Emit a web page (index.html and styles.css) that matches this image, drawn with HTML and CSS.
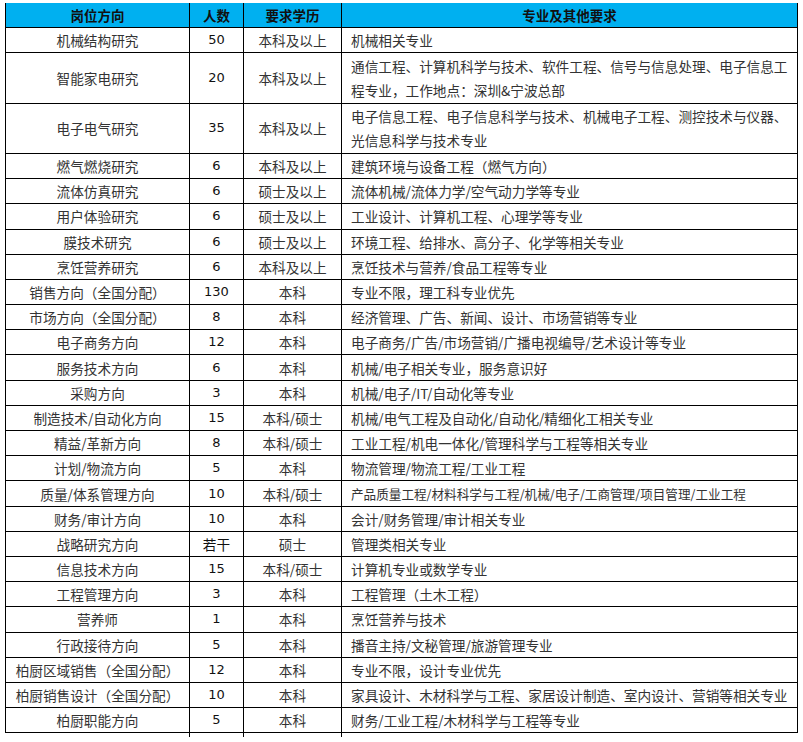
FILE: index.html
```html
<!DOCTYPE html>
<html lang="zh-CN">
<head>
<meta charset="utf-8">
<link rel="stylesheet" href="styles.css">
</head>
<body>
<table class="jobs">
  <colgroup>
    <col class="c-pos"><col class="c-num"><col class="c-edu"><col class="c-req">
  </colgroup>
  <thead>
    <tr><th>岗位方向</th><th>人数</th><th>要求学历</th><th>专业及其他要求</th></tr>
  </thead>
  <tbody>
    <tr><td>机械结构研究</td><td class="num">50</td><td>本科及以上</td><td class="req">机械相关专业</td></tr>
    <tr class="two"><td>智能家电研究</td><td class="num">20</td><td>本科及以上</td><td class="req">通信工程、计算机科学与技术、软件工程、信号与信息处理、电子信息工<br>程专业，工作地点：深圳&amp;宁波总部</td></tr>
    <tr class="two"><td>电子电气研究</td><td class="num">35</td><td>本科及以上</td><td class="req">电子信息工程、电子信息科学与技术、机械电子工程、测控技术与仪器、<br>光信息科学与技术专业</td></tr>
    <tr><td>燃气燃烧研究</td><td class="num">6</td><td>本科及以上</td><td class="req">建筑环境与设备工程（燃气方向）</td></tr>
    <tr><td>流体仿真研究</td><td class="num">6</td><td>硕士及以上</td><td class="req">流体机械/流体力学/空气动力学等专业</td></tr>
    <tr><td>用户体验研究</td><td class="num">6</td><td>硕士及以上</td><td class="req">工业设计、计算机工程、心理学等专业</td></tr>
    <tr><td>膜技术研究</td><td class="num">6</td><td>硕士及以上</td><td class="req">环境工程、给排水、高分子、化学等相关专业</td></tr>
    <tr><td>烹饪营养研究</td><td class="num">6</td><td>本科及以上</td><td class="req">烹饪技术与营养/食品工程等专业</td></tr>
    <tr><td>销售方向（全国分配）</td><td class="num">130</td><td>本科</td><td class="req">专业不限，理工科专业优先</td></tr>
    <tr><td>市场方向（全国分配）</td><td class="num">8</td><td>本科</td><td class="req">经济管理、广告、新闻、设计、市场营销等专业</td></tr>
    <tr><td>电子商务方向</td><td class="num">12</td><td>本科</td><td class="req">电子商务/广告/市场营销/广播电视编导/艺术设计等专业</td></tr>
    <tr><td>服务技术方向</td><td class="num">6</td><td>本科</td><td class="req">机械/电子相关专业，服务意识好</td></tr>
    <tr><td>采购方向</td><td class="num">3</td><td>本科</td><td class="req">机械/电子/IT/自动化等专业</td></tr>
    <tr><td>制造技术/自动化方向</td><td class="num">15</td><td>本科/硕士</td><td class="req">机械/电气工程及自动化/自动化/精细化工相关专业</td></tr>
    <tr><td>精益/革新方向</td><td class="num">8</td><td>本科/硕士</td><td class="req">工业工程/机电一体化/管理科学与工程等相关专业</td></tr>
    <tr><td>计划/物流方向</td><td class="num">5</td><td>本科</td><td class="req">物流管理/物流工程/工业工程</td></tr>
    <tr><td>质量/体系管理方向</td><td class="num">10</td><td>本科/硕士</td><td class="req small">产品质量工程/材料科学与工程/机械/电子/工商管理/项目管理/工业工程</td></tr>
    <tr><td>财务/审计方向</td><td class="num">10</td><td>本科</td><td class="req">会计/财务管理/审计相关专业</td></tr>
    <tr><td>战略研究方向</td><td class="num cjk">若干</td><td>硕士</td><td class="req">管理类相关专业</td></tr>
    <tr><td>信息技术方向</td><td class="num">15</td><td>本科/硕士</td><td class="req">计算机专业或数学专业</td></tr>
    <tr><td>工程管理方向</td><td class="num">3</td><td>本科</td><td class="req">工程管理（土木工程）</td></tr>
    <tr><td>营养师</td><td class="num">1</td><td>本科</td><td class="req">烹饪营养与技术</td></tr>
    <tr><td>行政接待方向</td><td class="num">5</td><td>本科</td><td class="req">播音主持/文秘管理/旅游管理专业</td></tr>
    <tr><td>柏厨区域销售（全国分配）</td><td class="num">12</td><td>本科</td><td class="req">专业不限，设计专业优先</td></tr>
    <tr><td>柏厨销售设计（全国分配）</td><td class="num">10</td><td>本科</td><td class="req">家具设计、木材科学与工程、家居设计制造、室内设计、营销等相关专业</td></tr>
    <tr><td>柏厨职能方向</td><td class="num">5</td><td>本科</td><td class="req">财务/工业工程/木材科学与工程等专业</td></tr>
    <tr class="tail"><td></td><td></td><td></td><td></td></tr>
  </tbody>
</table>
</body>
</html>
```

FILE: styles.css
```css
html, body {
  margin: 0;
  padding: 0;
  background: #ffffff;
}
body {
  padding: 3px 0 0 5px;
  font-family: "Noto Sans CJK SC", sans-serif;
  font-size: 13.65px;
  color: #333333;
}
.jobs {
  border-collapse: collapse;
  table-layout: fixed;
  width: 792px;
}
.c-pos { width: 184px; }
.c-num { width: 54px; }
.c-edu { width: 98px; }
.c-req { width: 456px; }

.jobs th,
.jobs td {
  border: 1px solid #000000;
  padding: 0;
  text-align: center;
  vertical-align: middle;
  white-space: nowrap;
  line-height: 24px;
}
.jobs th {
  border-top: none;
  background: #00b0f0;
  color: #111111;
  font-weight: bold;
  font-size: 13.5px;
  height: 23px;
}
.jobs tbody tr { height: 25.2px; }
.jobs tbody tr.two { height: 50.4px; }
.jobs td.num {
  font-family: "DejaVu Sans", "Noto Sans CJK SC", sans-serif;
  font-size: 13px;
  color: #111111;
}
.jobs td.num.cjk {
  font-family: "Noto Sans CJK SC", sans-serif;
  font-size: 13.65px;
}
.jobs td.req {
  text-align: left;
  padding-left: 9px;
}
.jobs td.small { font-size: 12.6px; }

.jobs tr.tail { height: 4px; }
.jobs tr.tail td {
  border: none;
  line-height: 0;
  height: 4px;
}
.jobs tr.tail td + td { border-left: 1px solid #000000; }
```
